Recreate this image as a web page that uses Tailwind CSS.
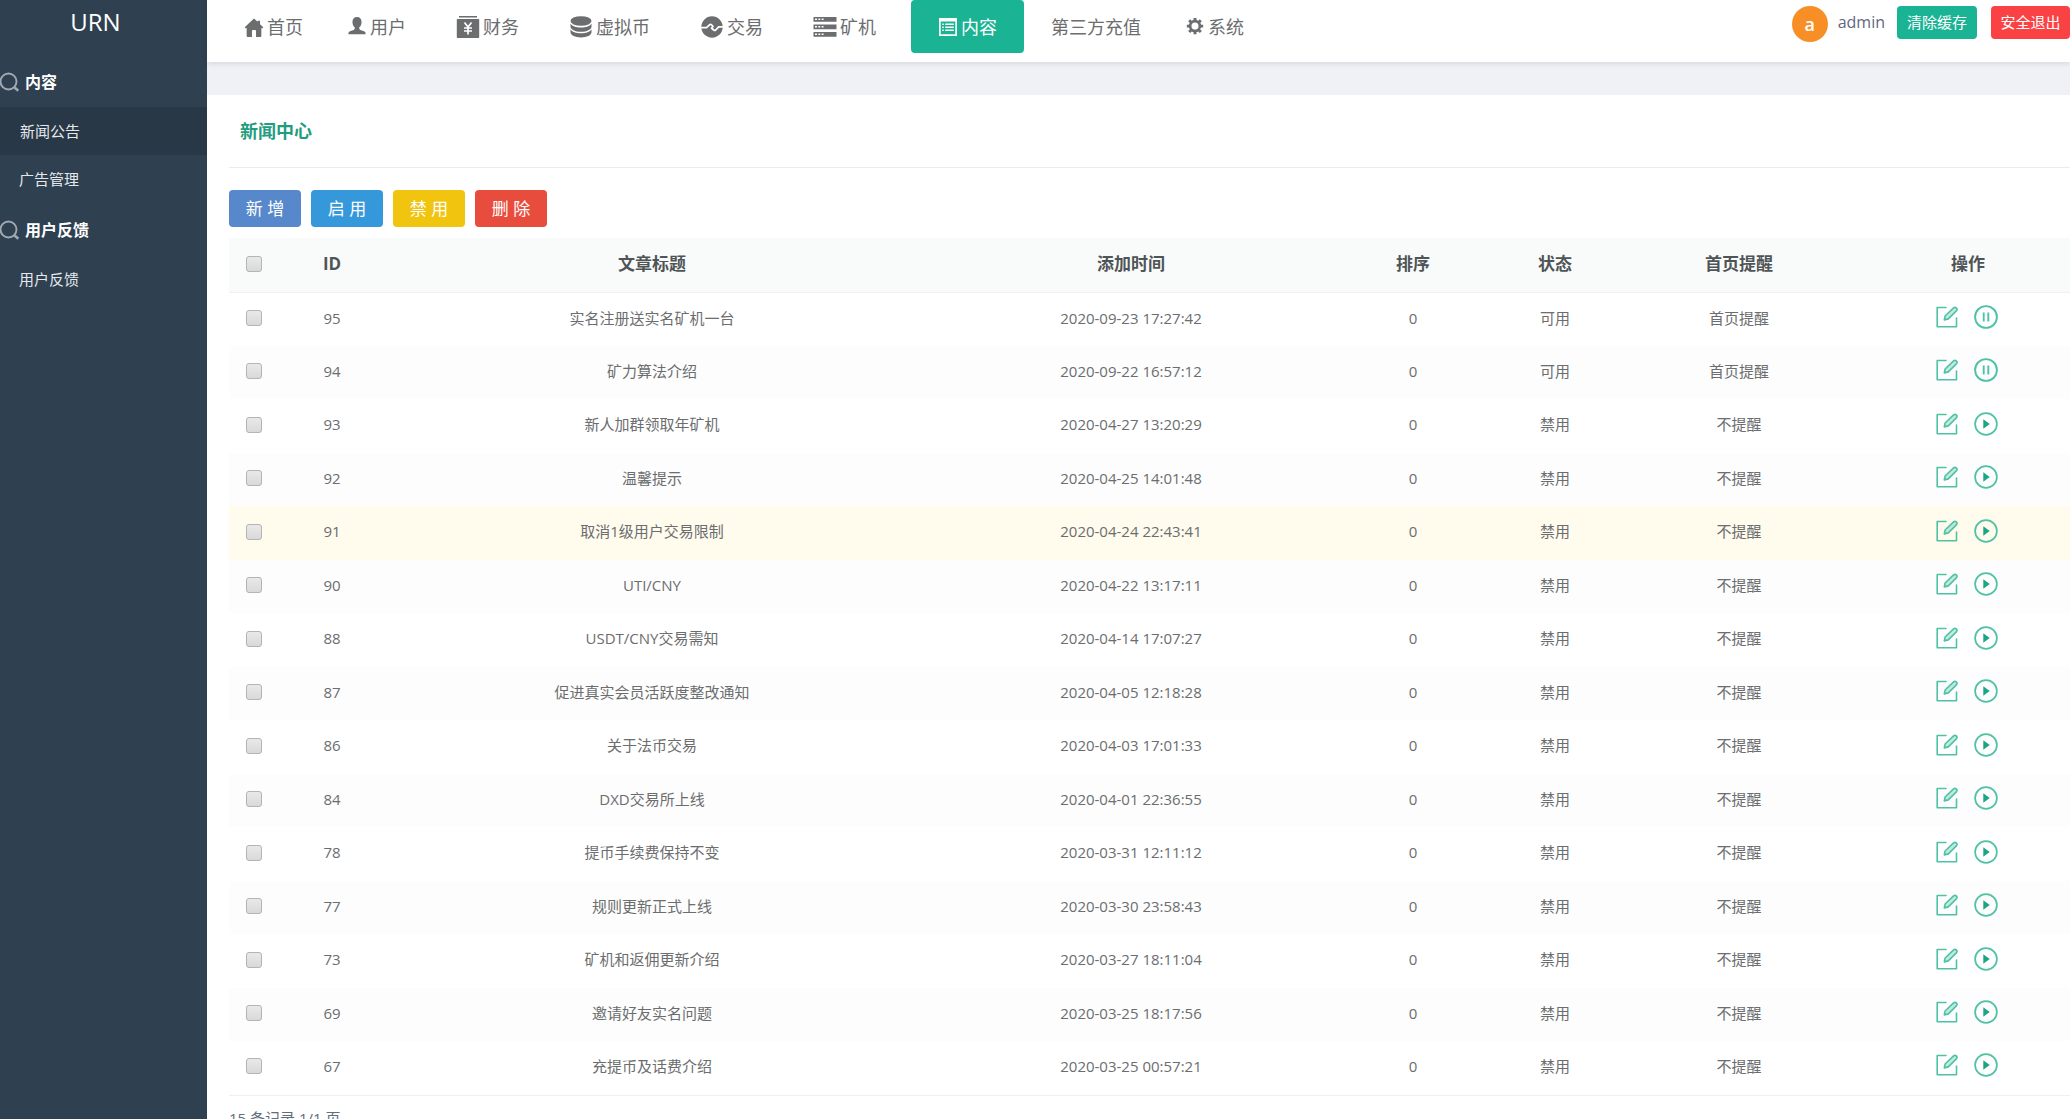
<!DOCTYPE html>
<html lang="zh-CN">
<head>
<meta charset="utf-8">
<meta name="viewport" content="width=device-width, initial-scale=1">
<title>新闻中心</title>
<script src="https://cdn.jsdelivr.net/npm/@tailwindcss/browser@4"></script>
</head>
<body class="bg-white font-['Open_Sans','Noto_Sans_CJK_SC',sans-serif] text-[15px] text-[#6b6d6f]">
<svg class="hidden" aria-hidden="true">
  <symbol id="home" viewBox="-0.75 -1.5 21.5 21.5"><path d="M10 0 0 9.600l1.100 1.200 1-.8v8.600c0 .8.5 1.400 1.300 1.400h4.400v-6.500c0-.7.4-1 1-1h2.400c.6 0 1 .4 1 1V20h4.400c.8 0 1.300-.6 1.300-1.400V10l1 .8L20 9.600l-3.500-3.400V2.500h-2.700v1.100z"/></symbol>
  <symbol id="user" viewBox="-1 0 22 22"><path d="M10 0C6.900 0 5 2.200 5 5.400c0 2.700 1 4.600 2.500 6v1.300c0 .8-.4 1.200-1.200 1.500l-4 1.400C1 16.100.5 17 .5 19h19c0-2-.5-2.900-1.800-3.400l-4-1.400c-.8-.3-1.200-.7-1.200-1.500v-1.300c1.500-1.400 2.500-3.300 2.500-6C15 2.200 13.100 0 10 0z"/></symbol>
  <symbol id="finance" viewBox="0 0 24 24"><path d="M3 1h18v1.500H3zM1.500 4h21a.7.7 0 0 1 .7.700v17.500a.8.8 0 0 1-.8.800H1.600a.8.8 0 0 1-.8-.800V4.700a.7.7 0 0 1 .7-.700z"/><path fill="none" stroke="#fff" stroke-width="1.700" d="m8.500 7.500 3.500 4.500 3.500-4.500M12 12v7.500M8 13h8M8 16h8"/></symbol>
  <symbol id="coins" viewBox="0 0 24 24"><ellipse cx="12" cy="6" rx="10.500" ry="4.800"/><path d="M1.500 8.500c1.500 2.800 5.500 4 10.500 4s9-1.200 10.500-4v3.200c0 2.900-4.700 5-10.500 5s-10.500-2.100-10.500-5z"/><path d="M1.500 14.300c1.500 2.800 5.500 4 10.500 4s9-1.200 10.500-4v3c0 2.900-4.700 5.200-10.500 5.200s-10.500-2.300-10.500-5.200z"/></symbol>
  <symbol id="trade" viewBox="0 0 24 24"><circle cx="12" cy="12" r="10.700"/><path fill="none" stroke="#fff" stroke-width="1.700" stroke-linejoin="round" d="M0 12.700h6.500l3-2.900c.7-.7 1.300-.7 2 0l1.500 1.700-1.500 1.500 2.200 2c.7.6 1.300.6 2 0l3-3.200H24"/></symbol>
  <symbol id="servers" viewBox="0 0 24 24"><path fill-rule="evenodd" d="M.5 2h23v4.700H.5zM2 3.600v1.500h2V3.600zm3.300 0v1.500h2V3.600zm3.300 0v1.500h2V3.600zM.5 9.500h23v4.700H.5zM2 11.100v1.500h2v-1.500zm3.300 0v1.500h2v-1.500zm3.300 0v1.500h2v-1.500zM.5 17h23v4.700H.5zM2 18.600v1.500h2v-1.500zm3.300 0v1.500h2v-1.500zm3.300 0v1.500h2v-1.500z"/></symbol>
  <symbol id="list" viewBox="0 0 20 20"><path fill-rule="evenodd" d="M1 1h18v18H1zM2.700 4.400v12.900h14.600V4.400zM4.200 6.500h1.600V8H4.200zm3 0h8.600V8H7.200zm-3 3h1.600V11H4.200zm3 0h8.600V11H7.200zm-3 3h1.600V14H4.200zm3 0h8.600V14H7.200z"/></symbol>
  <symbol id="gear" viewBox="-1 0 22 22"><circle cx="10" cy="10" r="5.400" fill="none" stroke="currentColor" stroke-width="3"/><path fill="none" stroke="currentColor" stroke-width="3.200" d="M10 1v3M10 16v3M1 10h3M16 10h3M3.600 3.600l2.200 2.200M14.200 14.200l2.200 2.200M3.600 16.400l2.200-2.200M14.200 5.800l2.200-2.200"/></symbol>
  <symbol id="search" viewBox="0 0 20 20"><g fill="none" stroke="currentColor" stroke-width="1.900"><circle cx="8.500" cy="9.500" r="8"/><path stroke-width="2.600" d="m14.300 15.300 4 3.500"/></g></symbol>
  <symbol id="edit" viewBox="0 0 22 22"><g fill="none" stroke="currentColor" stroke-width="1.600" stroke-linejoin="round" stroke-linecap="round"><path d="M10 1.500H1.200v19.300h19.300V12"/><path fill="currentColor" fill-opacity=".35" d="m8.300 13.900.8-3.900 8.500-8.100c1.800-1.500 4.400.7 3 2.700l-8.300 8.300z"/></g></symbol>
  <symbol id="pause" viewBox="0 0 24 24"><circle cx="12" cy="12" r="10.900" fill="none" stroke="currentColor" stroke-width="1.900"/><path fill="none" stroke="currentColor" stroke-width="1.900" d="M9.700 7.500v9M14.300 7.500v9"/></symbol>
  <symbol id="play" viewBox="0 0 24 24"><circle cx="12" cy="12" r="10.900" fill="none" stroke="currentColor" stroke-width="1.700"/><path fill="#1ba486" d="M9.300 7.200v9.600l6.400-4.800z"/></symbol>
</svg>

<div class="flex h-screen overflow-hidden">
  <aside class="w-[207px] shrink-0 bg-[#2f4050] text-[#e4e8ec]">
    <div class="flex h-[57px] justify-center pr-4 pt-1.5 text-2xl text-white">URN</div>
    <nav aria-label="侧栏">
      <h2 class="flex h-[50px] items-center gap-[5px] text-base font-bold text-white"><svg class="size-5 text-[#a0a9b4]"><use href="#search"/></svg>内容</h2>
      <ul class="pb-0.5">
        <li><a href="#news" aria-current="page" class="flex h-12 items-center bg-[#293846] pl-5">新闻公告</a></li>
        <li><a href="#ads" class="flex h-12 items-center pl-[19px]">广告管理</a></li>
      </ul>
      <h2 class="flex h-[50px] items-center gap-[5px] text-base font-bold text-white"><svg class="size-5 text-[#a0a9b4]"><use href="#search"/></svg>用户反馈</h2>
      <ul>
        <li><a href="#feedback" class="flex h-12 items-center pl-[19px]">用户反馈</a></li>
      </ul>
    </nav>
  </aside>

  <div class="flex min-w-0 flex-1 flex-col bg-[#eff1f6]">
    <header class="z-10 flex h-[62px] shrink-0 items-start justify-between bg-white shadow-[0_2px_5px_rgba(0,0,0,0.1)]">
      <nav aria-label="主导航" class="flex pl-5 text-lg whitespace-nowrap fill-current">
        <a href="#home" class="flex h-[53px] items-center gap-[3px] px-[27px]"><svg class="-ml-2.5 size-5"><use href="#home"/></svg>首页</a>
        <a href="#users" class="flex h-[53px] items-center gap-[3px] px-[27px]"><svg class="-ml-2.5 size-5"><use href="#user"/></svg>用户</a>
        <a href="#finance-page" class="flex h-[53px] items-center gap-[3px] px-[27px]"><svg class="-ml-1 size-6"><use href="#finance"/></svg>财务</a>
        <a href="#coin-page" class="flex h-[53px] items-center gap-[3px] px-[27px]"><svg class="-ml-1 size-6"><use href="#coins"/></svg>虚拟币</a>
        <a href="#trade-page" class="flex h-[53px] items-center gap-[3px] px-[27px]"><svg class="-ml-1 size-6"><use href="#trade"/></svg>交易</a>
        <a href="#miner-page" class="flex h-[53px] items-center gap-[3px] px-[27px]"><svg class="-ml-1 size-6"><use href="#servers"/></svg>矿机</a>
        <a href="#content" aria-current="page" class="ml-2 flex h-[53px] items-center gap-[3px] rounded-sm bg-[#1ab394] px-[27px] text-white"><svg class="size-5"><use href="#list"/></svg>内容</a>
        <a href="#recharge" class="flex h-[53px] items-center gap-[3px] px-[27px]">第三方充值</a>
        <a href="#system" class="flex h-[53px] items-center gap-[3px] px-[27px]"><svg class="-ml-2.5 size-5"><use href="#gear"/></svg>系统</a>
      </nav>
      <div class="flex items-start pt-1.5 whitespace-nowrap">
        <span class="mr-2.5 flex size-9 items-center justify-center rounded-full bg-[#f78f26] text-lg leading-none font-semibold text-white">a</span>
        <span class="mr-3 text-base leading-8 text-[#5f6780]">admin</span>
        <button type="button" class="mr-3.5 h-[33px] w-20 rounded-sm bg-[#1ab394] text-white">清除缓存</button>
        <button type="button" class="h-[33px] w-[79px] rounded-sm bg-[#fa4244] text-white">安全退出</button>
      </div>
    </header>

    <main class="mt-[33px] flex-1 overflow-y-auto bg-white pl-[22px] [scrollbar-width:none]">
      <h1 class="flex h-[73px] items-center border-b border-[#ececec] pl-[11px] text-lg font-bold text-[#1f9d7f]">新闻中心</h1>
      <div class="flex gap-2.5 pt-[22px] pb-[11px] text-[17px] text-white">
        <button type="button" class="h-[37px] w-[72px] rounded bg-[#5788cb]">新 增</button>
        <button type="button" class="h-[37px] w-[72px] rounded bg-[#3598db]">启 用</button>
        <button type="button" class="h-[37px] w-[72px] rounded bg-[#f0c40f]">禁 用</button>
        <button type="button" class="h-[37px] w-[72px] rounded bg-[#e84c3d]">删 除</button>
      </div>
      <table class="w-full table-fixed text-center">
        <colgroup>
          <col class="w-[65px]"><col class="w-[76px]"><col class="w-[564px]"><col class="w-[394px]"><col class="w-[170px]"><col class="w-[114px]"><col class="w-[254px]"><col class="w-[204px]">
        </colgroup>
        <thead>
          <tr class="h-[54px] border-b border-[#f0f2f2] bg-[#f9fbfb] text-[17px] text-[#4f5456] *:pb-0.5">
            <th class="pl-[17px]"><input type="checkbox" aria-label="全选" class="block size-4 appearance-none rounded-[3px] border border-[#b4b4b4] bg-linear-to-b from-[#e9e9e9] to-[#d9d9d9]"></th>
            <th>ID</th><th>文章标题</th><th>添加时间</th><th>排序</th><th>状态</th><th>首页提醒</th><th>操作</th>
          </tr>
        </thead>
        <tbody id="rows" class="border-b border-[#f0f0f0]"></tbody>
      </table>
      <p class="pt-2 leading-7 text-[#5f6e7f]">15 条记录 1/1 页</p>
    </main>
  </div>
</div>

<script>
const articles = [
  [95, '实名注册送实名矿机一台', '2020-09-23 17:27:42', true],
  [94, '矿力算法介绍', '2020-09-22 16:57:12', true],
  [93, '新人加群领取年矿机', '2020-04-27 13:20:29', false],
  [92, '温馨提示', '2020-04-25 14:01:48', false],
  [91, '取消1级用户交易限制', '2020-04-24 22:43:41', false],
  [90, 'UTI/CNY', '2020-04-22 13:17:11', false],
  [88, 'USDT/CNY交易需知', '2020-04-14 17:07:27', false],
  [87, '促进真实会员活跃度整改通知', '2020-04-05 12:18:28', false],
  [86, '关于法币交易', '2020-04-03 17:01:33', false],
  [84, 'DXD交易所上线', '2020-04-01 22:36:55', false],
  [78, '提币手续费保持不变', '2020-03-31 12:11:12', false],
  [77, '规则更新正式上线', '2020-03-30 23:58:43', false],
  [73, '矿机和返佣更新介绍', '2020-03-27 18:11:04', false],
  [69, '邀请好友实名问题', '2020-03-25 18:17:56', false],
  [67, '充提币及话费介绍', '2020-03-25 00:57:21', false],
];
const active = 91;
document.getElementById('rows').innerHTML = articles.map(([id, title, time, on]) => `
  <tr class="h-[54px] even:h-[53px] *:pb-[3px] ${id === active ? 'bg-[#fffbed]' : 'even:bg-[#fdfdfd]'}">
    <td class="pl-[17px]"><input type="checkbox" aria-label="选择 ${id}" class="block size-4 appearance-none rounded-[3px] border border-[#b4b4b4] bg-linear-to-b from-[#e9e9e9] to-[#d9d9d9]"></td>
    <td>${id}</td><td>${title}</td><td>${time}</td><td>0</td>
    <td>${on ? '可用' : '禁用'}</td><td>${on ? '首页提醒' : '不提醒'}</td>
    <td><div class="flex items-center justify-center gap-4 pr-[3px] pb-0.5 fill-current text-[#4fc2a6]">
      <a href="#edit-${id}" aria-label="编辑"><svg class="size-[22px]"><use href="#edit"/></svg></a>
      <a href="#toggle-${id}" aria-label="${on ? '禁用' : '启用'}"><svg class="size-6"><use href="#${on ? 'pause' : 'play'}"/></svg></a>
    </div></td>
  </tr>`).join('');
</script>
</body>
</html>
